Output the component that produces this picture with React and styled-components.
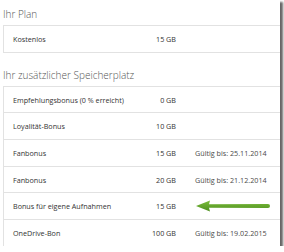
import styled, { createGlobalStyle } from 'styled-components';

const GlobalStyle = createGlobalStyle`
    html, body {
        margin: 0;
        padding: 0;
        background: #fff;
    }
`;

const plan = [{ name: 'Kostenlos', size: '15 GB' }];

const extras = [
    { name: 'Empfehlungsbonus (0 % erreicht)', size: '0 GB' },
    { name: 'Loyalität-Bonus', size: '10 GB' },
    { name: 'Fanbonus', size: '15 GB', note: 'Gültig bis: 25.11.2014' },
    { name: 'Fanbonus', size: '20 GB', note: 'Gültig bis: 21.12.2014' },
    { name: 'Bonus für eigene Aufnahmen', size: '15 GB', arrow: true },
    { name: 'OneDrive-Bon', size: '100 GB', note: 'Gültig bis: 19.02.2015' },
];

const Arrow = () => (
    <svg width="76" height="12" viewBox="0 0 76 12">
        <defs>
            <linearGradient id="g" x1="0" y1="0" x2="0" y2="1">
                <stop offset="0" stopColor="#7cbd3a" />
                <stop offset="1" stopColor="#4d8f1f" />
            </linearGradient>
        </defs>
        <path
            d="M1 6 L15 0.5 L14 4.2 L73 4 Q75 4 75 6 Q75 8 73 8 L14 7.8 L15 11.5 Z"
            fill="url(#g)"
        />
    </svg>
);

const App = () => {
    return (
        <>
            <GlobalStyle />
            <Frame>
                <Heading first>Ihr Plan</Heading>
                <Panel>
                    {plan.map((row) => (
                        <Row key={row.name}>
                            <Label>{row.name}</Label>
                            <Size>{row.size}</Size>
                            <Note />
                        </Row>
                    ))}
                </Panel>
                <Heading>Ihr zusätzlicher Speicherplatz</Heading>
                <Panel>
                    {extras.map((row, i) => (
                        <Row key={i}>
                            <Label>{row.name}</Label>
                            <Size>{row.size}</Size>
                            <Note>{row.arrow ? <Arrow /> : row.note}</Note>
                        </Row>
                    ))}
                </Panel>
            </Frame>
        </>
    );
};

const Frame = styled.div`
    width: 280px;
    height: 246px;
    overflow: hidden;
    padding-left: 3px;
    box-sizing: border-box;
    background: #fff;
    box-shadow: 3px 2px 2px rgba(0, 0, 0, 0.6);
    font-family: 'Open Sans', 'Noto Sans', sans-serif;
`;

const Heading = styled.h2`
    margin: ${(p) => (p.first ? '6px' : '14px')} 0 3px 0;
    padding: 0;
    font-size: 10px;
    line-height: 16px;
    font-weight: 300;
    color: #555;
    white-space: nowrap;
`;

const Panel = styled.div`
    width: 320px;
    border: 1px solid #e2e2e2;
    border-bottom: none;
`;

const Row = styled.div`
    display: grid;
    grid-template-columns: 114px 30px 1fr;
    column-gap: 19px;
    align-items: center;
    height: 25.7px;
    padding-left: 9px;
    border-bottom: 1px solid #e2e2e2;
    font-size: 7.2px;
    color: #333;
    white-space: nowrap;
`;

const Label = styled.span``;

const Size = styled.span`
    text-align: right;
`;

const Note = styled.span`
    display: flex;
    align-items: center;
    color: #4a4a4a;
`;

export default App;
